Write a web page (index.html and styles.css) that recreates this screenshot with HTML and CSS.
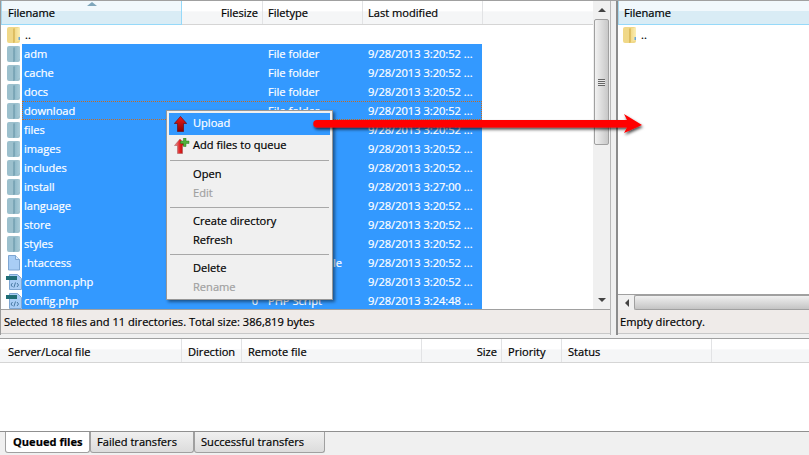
FILE: index.html
```html
<!DOCTYPE html>
<html lang="en">
<head>
<meta charset="utf-8">
<title>FileZilla</title>
<link rel="stylesheet" href="styles.css">
</head>
<body>
<svg class="defs" width="0" height="0" aria-hidden="true">
  <defs>
    <linearGradient id="fy" x1="0" y1="0" x2="1" y2="0"><stop offset="0" stop-color="#c9a238"/><stop offset=".3" stop-color="#f3dc8e"/><stop offset="1" stop-color="#fbeeb4"/></linearGradient>
    <linearGradient id="fb" x1="0" y1="0" x2="1" y2="0"><stop offset="0" stop-color="#5f8fa2"/><stop offset=".3" stop-color="#94bccb"/><stop offset="1" stop-color="#aaccd8"/></linearGradient>
    <linearGradient id="ar" x1="0" y1="0" x2="0" y2="1"><stop offset="0" stop-color="#f01c1c"/><stop offset="1" stop-color="#860000"/></linearGradient>
    <linearGradient id="ar2" x1="0" y1="0" x2="1" y2="0"><stop offset="0" stop-color="#e8a0a0"/><stop offset=".5" stop-color="#e02020"/><stop offset="1" stop-color="#a00000"/></linearGradient>
    <symbol id="up" viewBox="0 0 13 16"><path d="M6.500 .4 12.700 7.500H9.500V15.600H3.500V7.500H.3z" fill="url(#ar)" stroke="#6a0000" stroke-width=".6"/></symbol>
    <symbol id="up-add" viewBox="0 0 16 16"><path d="M6 1 11.500 7.500H8.500V15.600H3.500V7.500H.5z" fill="url(#ar2)" stroke="#a05050" stroke-width=".5"/><path d="M9.500 0h2.500v3h3v2.500h-3v3H9.500v-3h-3V3h3z" fill="#4fb03a" stroke="#2d7a22" stroke-width=".5"/></symbol>
    <symbol id="folder-open" viewBox="0 0 14 16"><rect x="0" y="0" width="13" height="16" rx="2" fill="#f0d888"/><path d="M6.500 1.500 13 .5V13l-6.500 3z" fill="url(#fy)"/><rect x="11.500" y="10" width="1.500" height="3" fill="#6aa6d8"/></symbol>
    <symbol id="folder" viewBox="0 0 14 16"><rect x="0" y="0" width="13" height="16" rx="2" fill="#9cc0cd"/><path d="M6.500 1.500 13 .5V13l-6.500 3z" fill="url(#fb)"/></symbol>
    <symbol id="file" viewBox="0 0 14 16"><path d="M1.500 .5h7l4 4v10.500h-11z" fill="#a9cdf5" stroke="#7ea6d2"/><path d="M8.500 .5v4h4" fill="#d8e9fb" stroke="#7ea6d2"/></symbol>
    <symbol id="php" viewBox="0 0 16 16"><path d="M3.500 .5h8l4 4v11h-12z" fill="#a9cdf5" stroke="#7ea6d2"/><rect x="0" y="2" width="11" height="4" fill="#1f6d74"/><path d="M6.500 9 5 11l1.500 2M11 9l1.500 2-1.500 2M9.500 8.500l-1.600 5" fill="none" stroke="#3d6f99" stroke-width=".9"/></symbol>
  </defs>
</svg>

<div class="app">
  <div class="panes">
    <section class="pane pane-left">
      <div class="list-wrap">
        <div class="list">
          <div class="head">
            <div class="hc c-name sorted">Filename<span class="sort"></span></div>
            <div class="hc c-size">Filesize</div>
            <div class="hc c-type">Filetype</div>
            <div class="hc c-date">Last modified</div>
            <div class="hc c-rest"></div>
          </div>
          <div class="row"><svg class="ico"><use href="#folder-open"/></svg><span class="name">..</span></div>
          <div class="row sel"><svg class="ico"><use href="#folder"/></svg><div class="cells"><span class="name">adm</span><span class="size"></span><span class="type">File folder</span><span class="date">9/28/2013 3:20:52 ...</span></div></div>
          <div class="row sel"><svg class="ico"><use href="#folder"/></svg><div class="cells"><span class="name">cache</span><span class="size"></span><span class="type">File folder</span><span class="date">9/28/2013 3:20:52 ...</span></div></div>
          <div class="row sel"><svg class="ico"><use href="#folder"/></svg><div class="cells"><span class="name">docs</span><span class="size"></span><span class="type">File folder</span><span class="date">9/28/2013 3:20:52 ...</span></div></div>
          <div class="row sel"><svg class="ico"><use href="#folder"/></svg><div class="cells focus"><span class="name">download</span><span class="size"></span><span class="type">File folder</span><span class="date">9/28/2013 3:20:52 ...</span></div></div>
          <div class="row sel"><svg class="ico"><use href="#folder"/></svg><div class="cells"><span class="name">files</span><span class="size"></span><span class="type">File folder</span><span class="date">9/28/2013 3:20:52 ...</span></div></div>
          <div class="row sel"><svg class="ico"><use href="#folder"/></svg><div class="cells"><span class="name">images</span><span class="size"></span><span class="type">File folder</span><span class="date">9/28/2013 3:20:52 ...</span></div></div>
          <div class="row sel"><svg class="ico"><use href="#folder"/></svg><div class="cells"><span class="name">includes</span><span class="size"></span><span class="type">File folder</span><span class="date">9/28/2013 3:20:52 ...</span></div></div>
          <div class="row sel"><svg class="ico"><use href="#folder"/></svg><div class="cells"><span class="name">install</span><span class="size"></span><span class="type">File folder</span><span class="date">9/28/2013 3:27:00 ...</span></div></div>
          <div class="row sel"><svg class="ico"><use href="#folder"/></svg><div class="cells"><span class="name">language</span><span class="size"></span><span class="type">File folder</span><span class="date">9/28/2013 3:20:52 ...</span></div></div>
          <div class="row sel"><svg class="ico"><use href="#folder"/></svg><div class="cells"><span class="name">store</span><span class="size"></span><span class="type">File folder</span><span class="date">9/28/2013 3:20:52 ...</span></div></div>
          <div class="row sel"><svg class="ico"><use href="#folder"/></svg><div class="cells"><span class="name">styles</span><span class="size"></span><span class="type">File folder</span><span class="date">9/28/2013 3:20:52 ...</span></div></div>
          <div class="row sel"><svg class="ico"><use href="#file"/></svg><div class="cells"><span class="name">.htaccess</span><span class="size"></span><span class="type">HTACCESS File</span><span class="date">9/28/2013 3:20:52 ...</span></div></div>
          <div class="row sel"><svg class="ico ico-php"><use href="#php"/></svg><div class="cells"><span class="name">common.php</span><span class="size"></span><span class="type">PHP Script</span><span class="date">9/28/2013 3:20:52 ...</span></div></div>
          <div class="row sel"><svg class="ico ico-php"><use href="#php"/></svg><div class="cells"><span class="name">config.php</span><span class="size">0</span><span class="type">PHP Script</span><span class="date">9/28/2013 3:24:48 ...</span></div></div>
        </div>
        <div class="vbar">
          <span class="tri tri-up"></span>
          <div class="vthumb"><span class="grip"></span></div>
          <span class="tri tri-down"></span>
        </div>
      </div>
      <div class="status">Selected 18 files and 11 directories. Total size: 386,819 bytes</div>
    </section>
    <div class="splitter"></div>
    <section class="pane pane-right">
      <div class="list list-right">
        <div class="head">
          <div class="hc c-right">Filename</div>
        </div>
        <div class="row"><svg class="ico"><use href="#folder-open"/></svg><span class="name">..</span></div>
      </div>
      <div class="hbar"><span class="tri tri-left"></span><div class="hthumb"></div></div>
      <div class="status">Empty directory.</div>
    </section>
  </div>

  <section class="queue">
    <div class="head qhead">
      <div class="hc q-file">Server/Local file</div>
      <div class="hc q-dir">Direction</div>
      <div class="hc q-remote">Remote file</div>
      <div class="hc q-size">Size</div>
      <div class="hc q-pri">Priority</div>
      <div class="hc q-stat">Status</div>
      <div class="hc c-rest"></div>
    </div>
    <div class="qbody"></div>
  </section>

  <nav class="tabs">
    <div class="tab active">Queued files</div>
    <div class="tab t-failed">Failed transfers</div>
    <div class="tab t-ok">Successful transfers</div>
  </nav>
</div>

<div class="menu">
  <div class="mi hot"><svg class="mico"><use href="#up"/></svg>Upload</div>
  <div class="mi add"><svg class="mico mico-add"><use href="#up-add"/></svg>Add files to queue</div>
  <div class="sep"></div>
  <div class="mi">Open</div>
  <div class="mi off">Edit</div>
  <div class="sep"></div>
  <div class="mi">Create directory</div>
  <div class="mi">Refresh</div>
  <div class="sep"></div>
  <div class="mi">Delete</div>
  <div class="mi off">Rename</div>
</div>

<svg class="arrow" width="340" height="34" viewBox="0 0 340 34" aria-hidden="true">
  <defs><filter id="sh" x="-5%" y="-40%" width="110%" height="200%"><feDropShadow dx="1" dy="2" stdDeviation="1.500" flood-color="#000" flood-opacity=".7"/></filter></defs>
  <path d="M7 12H317L314 6 332 17 314 25 317 19.500H7a3.750 3.750 0 0 1 0-7.500z" fill="#f00" filter="url(#sh)"/>
</svg>
</body>
</html>
```
FILE: styles.css
```css
* { box-sizing: border-box; }
html, body { margin: 0; padding: 0; }
body {
  width: 809px;
  height: 455px;
  overflow: hidden;
  position: relative;
  background: #f0f0f0;
  font: 11.1px/19px "Open Sans", "Noto Sans", sans-serif;
  -webkit-text-stroke: .2px;
  color: #000;
}
.defs { position: absolute; }
.app { display: flex; flex-direction: column; height: 455px; }
.panes { display: flex; height: 335px; border-top: 1px solid #a0a0a0; }
.pane { display: flex; flex-direction: column; height: 334px; }
.pane-left { width: 611px; border-left: 1px solid #9a9a9a; border-right: 1px solid #b8b8b8; }
.pane-right { flex: 1; min-width: 0; border-left: 2px solid #8c8c8c; }
.splitter { width: 5px; background: #f0f0f0; }
.list-wrap { display: flex; height: 309px; background: #fff; border-bottom: 1px solid #a0a0a0; }
.list { flex: 1; min-width: 0; overflow: hidden; background: #fff; }
.list-right { height: 293px; flex: none; }
.pane-right .row { padding-left: 5px; }
.head {
  display: flex;
  height: 24px;
  flex: none;
  background: linear-gradient(#fff 0, #fff 45%, #f5f6f7 46%, #f5f6f7 100%);
  border-bottom: 1px solid #d5d5d5;
}
.hc {
  line-height: 23px;
  padding: 0 4px 0 7px;
  border-right: 1px solid #e2e3e5;
  white-space: nowrap;
  flex: none;
}
.qhead .hc { line-height: 25px; }
.sorted, .c-right {
  background: linear-gradient(#f1f8fc 0, #f1f8fc 42%, #d9ecf5 43%, #d9ecf5 100%);
  border-right: 1px solid #96d9f9;
  box-shadow: inset 1px 0 0 #a8d8ee;
  border-bottom: 1px solid #96d9f9;
  height: 24px;
  position: relative;
}
.c-name { width: 181px; }
.c-size { width: 81px; text-align: right; padding-right: 4px; }
.c-type { width: 100px; padding-left: 5px; }
.c-date { width: 120px; padding-left: 5px; }
.c-rest { flex: 1; border-right: 0; }
.c-right { flex: 1; padding-left: 6px; border-right: 0; }
.sort {
  position: absolute;
  left: 86px;
  top: 1px;
  border: 5px solid transparent;
  border-top: 0;
  border-bottom: 4px solid #7fa6bb;
}
.row { display: flex; height: 19px; align-items: center; padding-left: 6px; white-space: nowrap; }
.ico { width: 14px; height: 16px; flex: none; margin-right: 1px; }
.ico-php { width: 16px; margin: 0 0 0 -1px; }
.row > .name { padding-left: 3px; }
.cells { display: flex; width: 460px; height: 19px; background: #3399ff; color: #fff; }
.focus { outline: 1px dotted #c86a1e; outline-offset: -1px; }
.name { width: 158px; padding-left: 2px; }
.size { width: 78px; text-align: right; }
.type { width: 110px; padding-left: 10px; }
.date { width: 114px; }
.vbar {
  width: 17px;
  flex: none;
  background: #f0f0f0;
  position: relative;
  display: flex;
  flex-direction: column;
  align-items: center;
}
.vthumb {
  width: 15px;
  height: 126px;
  margin-top: 7px;
  border: 1px solid #a0a0a0;
  border-radius: 2px;
  background: linear-gradient(90deg, #f2f2f2, #dcdcdc 50%, #c8c8c8);
  display: flex;
  align-items: center;
  justify-content: center;
}
.grip { width: 7px; height: 7px; background: repeating-linear-gradient(#666 0, #666 1px, #e8e8e8 1px, #e8e8e8 2px); }
.tri { border: 4px solid transparent; display: block; flex: none; }
.tri-up { border-top: 0; border-bottom: 4px solid #444; margin-top: 7px; }
.tri-down { border-bottom: 0; border-top: 4px solid #444; margin-top: auto; margin-bottom: 7px; }
.tri-left { border-left: 0; border-right: 4px solid #444; margin: 0 4px 0 7px; }
.status { height: 24px; line-height: 23px; padding-left: 3px; background: #efebe9; border-bottom: 1px solid #c8c8c8; white-space: nowrap; }
.pane-right .status { padding-left: 2px; }
.hbar { display: flex; align-items: center; height: 16px; background: #f0f0f0; border-top: 1px solid #a0a0a0; }
.hthumb { flex: 1; height: 15px; margin-left: 1px; border: 1px solid #a0a0a0; border-right: 0; background: linear-gradient(#f0f0f0, #dadada 50%, #c4c4c4); border-radius: 2px 0 0 2px; }
.queue { height: 94px; margin-top: 3px; border-top: 1px solid #a0a0a0; border-bottom: 1px solid #909090; background: #fff; display: flex; flex-direction: column; flex: none; }
.qbody { flex: 1; }
.q-file { width: 182px; padding-left: 8px; }
.q-dir { width: 60px; padding-left: 6px; }
.q-remote { width: 180px; padding-left: 6px; }
.q-size { width: 80px; text-align: right; }
.q-pri { width: 60px; padding-left: 6px; }
.q-stat { width: 150px; padding-left: 6px; }
.tabs { display: flex; flex: 1; padding-left: 5px; align-items: flex-start; }
.tab {
  height: 21px;
  line-height: 20px;
  border: 1px solid #a0a0a0;
  border-top: 0;
  border-radius: 0 0 3px 3px;
  background: linear-gradient(#f0f0f0, #dcdcdc);
  padding-left: 6px;
  flex: none;
}
.tab.active {
  width: 85px;
  background: #fff;
  font-weight: 700;
  padding-left: 7px;
}
.t-failed { width: 104px; }
.t-ok { width: 131px; }
.menu {
  position: absolute;
  left: 166px;
  top: 110px;
  width: 167px;
  height: 190px;
  background: #f0f0f0;
  border: 1px solid #979797;
  padding: 2px;
  box-shadow: 2px 2px 3px rgba(0,0,0,.45);
}
.mi { position: relative; height: 19px; line-height: 17px; padding-left: 24px; white-space: nowrap; }
.mico { position: absolute; left: 5px; top: 3px; width: 13px; height: 16px; }
.mico-add { left: 5px; top: 3px; width: 16px; }
.hot { height: 22px; line-height: 20px; background: #3399ff; color: #fff; }
.add { height: 21px; line-height: 20px; }
.off { color: #a0a0a0; }
.sep { height: 1px; background: #a8a8a8; margin: 4px 1px; }
.arrow { position: absolute; left: 310px; top: 108px; }
```
